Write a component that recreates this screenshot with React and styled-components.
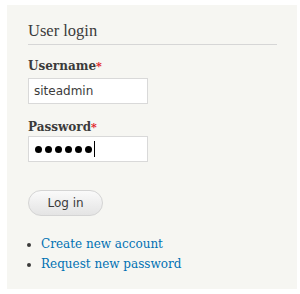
import React from 'react';
import styled, { createGlobalStyle } from 'styled-components';

const GlobalStyle = createGlobalStyle`
  html, body {
    margin: 0;
    padding: 0;
    background: #ffffff;
  }
`;

const App = () => {
  return (
    <>
      <GlobalStyle />
      <Page>
        <Block>
          <Title>User login</Title>
          <Field $gap={13}>
            <Label $mb={3}>Username<Required>*</Required></Label>
            <Input type="text" defaultValue="siteadmin" />
          </Field>
          <Field $gap={15}>
            <Label $mb={0}>Password<Required>*</Required></Label>
            <PasswordBox aria-label="password">
              {[0, 1, 2, 3, 4, 5].map((i) => <Dot key={i} />)}
              <Caret />
            </PasswordBox>
          </Field>
          <Button>Log in</Button>
          <Links>
            <Item><Link href="#">Create new account</Link></Item>
            <Item><Link href="#">Request new password</Link></Item>
          </Links>
        </Block>
      </Page>
    </>
  );
};

export default App;

const Page = styled.div`
  width: 300px;
  height: 294px;
  padding: 5px 3px 5px 7px;
  box-sizing: border-box;
`;

const Block = styled.div`
  height: 100%;
  background: #f6f6f2;
  padding: 16px 20px 0 21px;
  box-sizing: border-box;
`;

const Title = styled.h2`
  margin: 0;
  font-family: 'Liberation Serif', serif;
  font-weight: normal;
  font-size: 16.5px;
  color: #3b3b3b;
  line-height: 20px;
  padding-bottom: 3px;
  border-bottom: 1px solid #d6d6d6;
`;

const Field = styled.div`
  display: flex;
  flex-direction: column;
  align-items: flex-start;
  margin-top: ${(p) => p.$gap || 12}px;
`;

const Label = styled.label`
  font-family: 'DejaVu Serif', serif;
  font-weight: bold;
  font-size: 12px;
  color: #3b3b3b;
  line-height: 16px;
  margin-bottom: ${(p) => p.$mb ?? 2}px;
`;

const Required = styled.span`
  color: #e0141e;
  font-size: 11px;
`;

const Input = styled.input`
  width: 120px;
  height: 26px;
  box-sizing: border-box;
  border: 1px solid #d9d9d9;
  background: #fff;
  padding: 2px 5px;
  font-family: 'DejaVu Sans', sans-serif;
  font-size: 12px;
  color: #3b3b3b;
  outline: none;
`;

const PasswordBox = styled.div`
  width: 120px;
  height: 26px;
  box-sizing: border-box;
  border: 1px solid #d9d9d9;
  background: #fff;
  display: flex;
  align-items: center;
  gap: 3px;
  padding-left: 6px;
`;

const Dot = styled.span`
  width: 7px;
  height: 7px;
  border-radius: 50%;
  background: #000;
`;

const Caret = styled.span`
  width: 1px;
  height: 16px;
  background: #000;
  margin-left: -1px;
`;

const Button = styled.button`
  display: block;
  margin-top: 28px;
  width: 75px;
  height: 26px;
  border: 1px solid #d4d4d4;
  border-radius: 13px;
  background: linear-gradient(#fafafa, #e4e4e4);
  font-family: 'DejaVu Sans', sans-serif;
  font-size: 12px;
  color: #3b3b3b;
  padding: 0;
`;

const Links = styled.ul`
  margin: 18px 0 0 0;
  padding: 0 0 0 13px;
  list-style: disc;
  color: #3b3b3b;
`;

const Item = styled.li`
  font-family: 'DejaVu Serif', serif;
  font-size: 12px;
  line-height: 20px;
`;

const Link = styled.a`
  color: #0071b3;
  text-decoration: none;
`;
